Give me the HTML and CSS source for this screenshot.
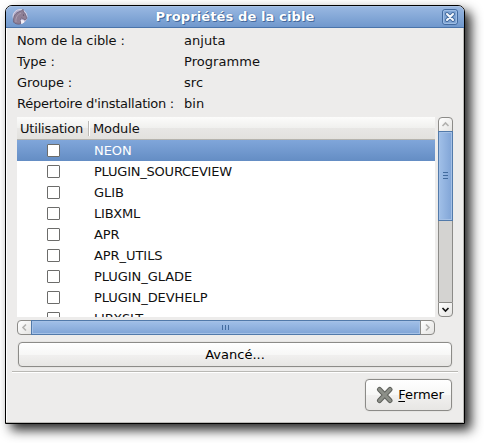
FILE: index.html
```html
<!DOCTYPE html>
<html lang="fr">
<head>
<meta charset="utf-8">
<title>Propriétés de la cible</title>
<link rel="stylesheet" href="styles.css">
</head>
<body>
<main class="window">
  <header class="titlebar">
    <svg class="app-icon" width="16" height="16" viewBox="0 0 16 16">
      <circle cx="8" cy="7.500" r="7" fill="#b3aecb" stroke="#d6d3e4"/>
      <path d="M1.500 13C1 9 2.500 4.500 6.500 3L9.500 1.800 11 .3 11.500 3C13.500 4.500 14 7 15 9L13.500 11 11.500 10 9.500 8.800 8.500 10.500 8.500 15C5 15.500 2.500 14.500 1.500 13Z" fill="#8f8096" stroke="#675a72" stroke-width=".7"/>
      <path d="M4 13C3.500 9 5 6 9 4" fill="none" stroke="#aea0b3" stroke-width="1"/>
      <path d="M8.500 11l3.500.3v2.300L9.500 15z" fill="#f3eff6"/>
      <circle cx="11.500" cy="6" r=".6" fill="#443c50"/>
    </svg>
    <h1 class="title">Propriétés de la cible</h1>
    <button class="close" aria-label="Fermer la fenêtre">
      <svg width="16" height="16" viewBox="0 0 16 16">
        <rect x=".5" y=".5" width="15" height="15" rx="2.500" fill="#80a5d5" stroke="#426a9f"/>
        <rect x="1.500" y="1.500" width="13" height="13" rx="1.500" fill="none" stroke="#9dbce3"/>
        <path d="M5 5l6 6M11 5l-6 6" stroke="#456c9f" stroke-width="4" stroke-linecap="round"/>
        <path d="M5 5l6 6M11 5l-6 6" stroke="#f4f7fc" stroke-width="2.100" stroke-linecap="round"/>
      </svg>
    </button>
  </header>
  <section class="content">
    <dl class="details">
      <dt>Nom de la cible :</dt><dd>anjuta</dd>
      <dt>Type :</dt><dd>Programme</dd>
      <dt>Groupe :</dt><dd>src</dd>
      <dt class="long">Répertoire d'installation :</dt><dd>bin</dd>
    </dl>
    <div class="scroller">
      <div class="list">
        <div class="list-head"><span class="col-use">Utilisation</span><span class="col-module">Module</span></div>
        <div class="row selected"><i class="check"></i><span>NEON</span></div>
        <div class="row"><i class="check"></i><span class="tight">PLUGIN_SOURCEVIEW</span></div>
        <div class="row"><i class="check"></i><span>GLIB</span></div>
        <div class="row"><i class="check"></i><span class="tight">LIBXML</span></div>
        <div class="row"><i class="check"></i><span>APR</span></div>
        <div class="row"><i class="check"></i><span>APR_UTILS</span></div>
        <div class="row"><i class="check"></i><span>PLUGIN_GLADE</span></div>
        <div class="row"><i class="check"></i><span>PLUGIN_DEVHELP</span></div>
        <div class="row"><i class="check"></i><span class="tight">LIBXSLT</span></div>
      </div>
      <div class="bar vertical">
        <span class="step first"><svg width="13" height="13" viewBox="0 0 13 13"><path d="M3.500 8l3-3 3 3" fill="none" stroke="#b2b1af" stroke-width="1.600"/></svg></span>
        <span class="thumb"><i></i><i></i><i></i></span>
        <span class="trough"></span>
        <span class="step last"><svg width="13" height="13" viewBox="0 0 13 13"><path d="M3.500 5l3 3 3-3" fill="none" stroke="#111" stroke-width="1.600"/></svg></span>
      </div>
      <div class="bar horizontal">
        <span class="step first"><svg width="13" height="13" viewBox="0 0 13 13"><path d="M8 3.500l-3 3 3 3" fill="none" stroke="#b2b1af" stroke-width="1.600"/></svg></span>
        <span class="thumb"><i></i><i></i><i></i></span>
        <span class="step last"><svg width="13" height="13" viewBox="0 0 13 13"><path d="M5 3.500l3 3-3 3" fill="none" stroke="#b2b1af" stroke-width="1.600"/></svg></span>
      </div>
    </div>
    <button class="button advanced">Avancé...</button>
    <hr class="separator">
    <footer class="actions">
      <button class="button dismiss">
        <svg width="18" height="18" viewBox="0 0 18 18">
          <path d="M3.500 3.500l10.500 11M14 3.500l-10.500 11" stroke="#5c5e59" stroke-width="5" stroke-linecap="round"/>
          <path d="M3.500 3.500l10.500 11M14 3.500l-10.500 11" stroke="#8c8f88" stroke-width="3.200" stroke-linecap="round"/>
        </svg>
        <span><u>F</u>ermer</span>
      </button>
    </footer>
  </section>
</main>
</body>
</html>
```
FILE: styles.css
```css
* { box-sizing: border-box; }
body {
  margin: 0;
  padding: 5px;
  height: 443px;
  overflow: hidden;
  background: #fff;
  color: #111;
  font: 13px/21px "DejaVu Sans", sans-serif;
}
.window {
  width: 460px;
  height: 419px;
  border: 1px solid #000;
  border-radius: 7px 7px 0 0;
  background: #edeceb;
  box-shadow: 6px 6px 12px 0 rgba(0, 0, 0, .85);
}
.titlebar {
  display: flex;
  align-items: center;
  height: 22px;
  padding: 0 6px;
  border-top: 1px solid #a9c3e6;
  border-bottom: 1px solid #4a74aa;
  border-radius: 6px 6px 0 0;
  background: linear-gradient(#98b7e1, #7098cd);
}
.app-icon { flex: none; }
.title {
  flex: 1;
  margin: 0;
  color: #fff;
  font-size: 13px;
  line-height: 20px;
  letter-spacing: .12px;
  text-align: center;
  text-shadow: 1px 1px #44699c, 0 0 1px #44699c;
}
.close { width: 16px; height: 16px; padding: 0; border: 0; background: none; }
svg { display: block; }
.content {
  height: 395px;
  padding: 2px 11px 0 10px;
  border: solid #b9b8b5;
  border-width: 0 1px 1px 0;
  box-shadow: inset 1px 0 #fff;
}
.details {
  display: grid;
  grid-template-columns: 167px 1fr;
  grid-auto-rows: 21px;
  margin: 0 0 3px 1px;
}
.details dt { letter-spacing: -.12px; white-space: nowrap; }
.details .long { letter-spacing: -.26px; }
.details dd { margin: 0; letter-spacing: .05px; }
.scroller {
  display: grid;
  grid-template-columns: 418px 15px;
  grid-template-rows: 201px 15px;
  column-gap: 3px;
  row-gap: 2px;
  margin-left: 1px;
}
.list { height: 200px; overflow: hidden; background: #fff; }
.list-head {
  display: flex;
  align-items: center;
  height: 23px;
  border-bottom: 1px solid #b5b3ad;
  background: linear-gradient(#fcfcfb, #f0f0ee 50%, #e8e7e5 51%, #e2e1de);
}
.col-use { width: 72px; padding-left: 3px; border-right: 1px solid #bbb9b5; line-height: 15px; letter-spacing: -.18px; white-space: nowrap; }
.col-module { padding-left: 3px; border-left: 1px solid #fff; line-height: 15px; letter-spacing: -.1px; }
.row { display: grid; grid-template-columns: 77px 1fr; align-items: center; height: 21px; letter-spacing: -.06px; }
.tight { letter-spacing: -.22px; }
.selected { background: linear-gradient(#80a6da, #648dc4); color: #fff; }
.check {
  width: 13px;
  height: 13px;
  margin-left: 30px;
  border: 1px solid #6c6c6a;
  border-radius: 1px;
  background: #fff;
}
.bar { display: flex; }
.vertical { flex-direction: column; height: 200px; }
.step {
  flex: none;
  width: 15px;
  height: 15px;
  border: 1px solid #8c8b88;
  background: linear-gradient(135deg, #fff, #e5e4e2);
}
.thumb {
  display: flex;
  justify-content: center;
  align-items: center;
  gap: 2px;
  border: 1px solid #527aaa;
  box-shadow: inset 0 0 0 1px #a5c1e6;
}
.thumb i { background: #426b9e; }
.vertical .thumb { flex-direction: column; height: 90px; padding-bottom: 2px; background: linear-gradient(90deg, #a1c0e8, #80a4d6); }
.vertical .thumb i { width: 5px; height: 1px; }
.trough { flex: 1; border: solid #8c8b88; border-width: 0 1px; background: #d4d3d1; }
.horizontal .thumb { flex: 1; padding-right: 2px; background: linear-gradient(#a1c0e8, #80a4d6); }
.horizontal .thumb i { width: 1px; height: 5px; }
.vertical .first { border-radius: 4px 4px 0 0; margin-bottom: -1px; }
.vertical .last { border-radius: 0 0 4px 4px; }
.horizontal .first { border-radius: 4px 0 0 4px; margin-right: -1px; }
.horizontal .last { border-radius: 0 4px 4px 0; margin-left: -1px; }
.button {
  display: flex;
  align-items: center;
  justify-content: center;
  border: 1px solid #8c8b88;
  border-radius: 4px;
  background: linear-gradient(#fff, #f7f7f6 50%, #f1f0ef 51%, #e7e6e4);
  box-shadow: 0 0 0 1px #e6e5e3;
  color: #000;
  font: inherit;
}
.advanced { width: 434px; height: 25px; margin: 7px 0 4px 2px; padding: 0; }
.separator { height: 2px; margin: 0 -6px 6px -4px; border: 0; border-top: 1px solid #b9b8b4; background: #fff; }
.actions { display: flex; justify-content: flex-end; }
.dismiss { width: 87px; height: 32px; padding: 0 0 0 3px; gap: 4px; }
.dismiss span { margin-top: -1px; letter-spacing: -.1px; }
.dismiss u { text-underline-offset: 2px; }
```
